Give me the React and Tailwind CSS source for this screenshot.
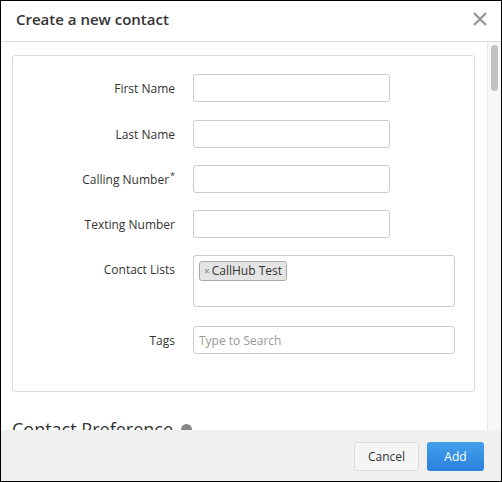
const font = { fontFamily: '"Open Sans", "Liberation Sans", sans-serif' };

function Field({ label, required, children, top = false }) {
  return (
    <div className={`flex ${top ? "items-start" : "items-center"}`}>
      <label
        className={`w-[162px] shrink-0 text-right text-[12px] text-[#333] ${top ? "pt-[6px]" : "pt-px"}`}
      >
        {label}
        {required && <sup className="text-[9px] ml-px">*</sup>}
      </label>
      <div className="ml-[18px]">{children}</div>
    </div>
  );
}

function TextInput({ wide = false, placeholder }) {
  return (
    <input
      type="text"
      placeholder={placeholder}
      className={`${wide ? "w-[262px]" : "w-[197px]"} h-[28px] rounded-[3px] border border-[#ccc] bg-white px-[5px] text-[12px] text-[#333] placeholder:text-[#999] outline-none`}
      style={font}
    />
  );
}

export default function App() {
  return (
    <div
      className="w-[502px] h-[482px] border border-black bg-white flex flex-col overflow-hidden"
      style={font}
    >
      <div className="h-[41px] shrink-0 flex items-center justify-between pl-[15px] pr-[13px] pb-[4px] border-b border-[#ddd]">
        <h2 className="text-[15px] font-semibold text-[#333]">Create a new contact</h2>
        <svg width="16" height="16" viewBox="0 0 16 16" className="text-[#999]">
          <path d="M2 2 L14 14 M14 2 L2 14" stroke="currentColor" strokeWidth="2.4" />
        </svg>
      </div>

      <div className="flex-1 flex min-h-0">
        <div className="flex-1 overflow-hidden pl-[11px] pr-[12px] pt-[13px]">
          <div className="border border-[#ddd] rounded-[3px] pt-[18px] pb-[37px] flex flex-col gap-[17px]">
            <Field label="First Name"><TextInput /></Field>
            <div className="mt-px">
              <Field label="Last Name"><TextInput /></Field>
            </div>
            <Field label="Calling Number" required><TextInput /></Field>
            <Field label="Texting Number"><TextInput /></Field>
            <Field label="Contact Lists" top>
              <div className="w-[262px] h-[52px] rounded-[3px] border border-[#ccc] px-[5px] pt-[5px] flex items-start">
                <span className="inline-flex items-center h-[20px] px-[4px] rounded-[3px] border border-[#aaa] bg-[#e4e4e4] text-[12px] text-[#333]">
                  <span className="text-[#999] text-[10px] mr-[2px] font-bold">×</span>
                  CallHub Test
                </span>
              </div>
            </Field>
            <div className="mt-[2px]">
              <Field label="Tags"><TextInput wide placeholder="Type to Search" /></Field>
            </div>
          </div>
          <div className="mt-[28px] flex items-center gap-[8px]">
            <h3 className="text-[18px] text-[#333] leading-none">Contact Preference</h3>
            <span className="w-[11px] h-[11px] rounded-full bg-[#888]" />
          </div>
        </div>
        <div className="w-[14px] shrink-0 border-l border-[#e8e8e8] bg-[#f7f7f7] pt-[3px] flex justify-center">
          <div className="w-[7px] h-[46px] rounded-full bg-[#c1c1c1]" />
        </div>
      </div>

      <div className="h-[51px] shrink-0 bg-[#f0f0f0] flex items-center justify-end gap-[8px] pr-[17px] pt-[2px]">
        <button
          className="h-[29px] w-[65px] rounded-[3px] border border-[#ddd] bg-[#f5f5f5] text-[12px] text-[#333]"
          style={font}
        >
          Cancel
        </button>
        <button
          className="h-[29px] w-[57px] rounded-[3px] bg-gradient-to-b from-[#42a0ec] to-[#2b80dc] text-[12px] text-white"
          style={font}
        >
          Add
        </button>
      </div>
    </div>
  );
}
